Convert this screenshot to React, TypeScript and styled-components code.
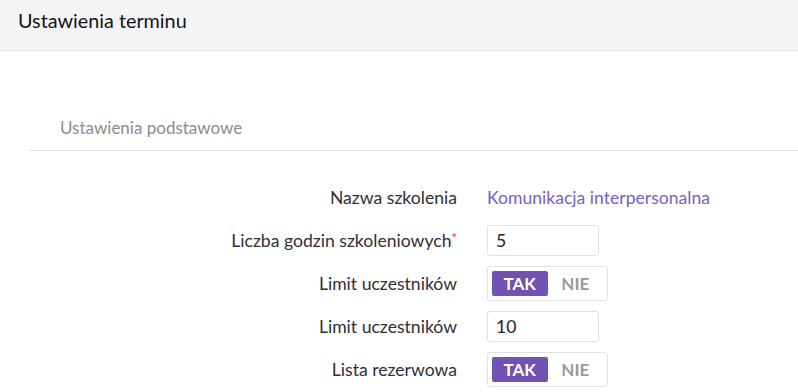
import { createGlobalStyle } from "styled-components";
import styled from "styled-components";

const GlobalStyle = createGlobalStyle`
  html, body {
    margin: 0;
    padding: 0;
    background: #fff;
  }
  body {
    font-family: Lato, "Open Sans", sans-serif;
    color: #333;
  }
`;

type Field =
  | { kind: "text"; label: string; value: string }
  | { kind: "input"; label: string; value: string; required?: boolean }
  | { kind: "toggle"; label: string; value: boolean };

const fields: Field[] = [
  { kind: "text", label: "Nazwa szkolenia", value: "Komunikacja interpersonalna" },
  { kind: "input", label: "Liczba godzin szkoleniowych", value: "5", required: true },
  { kind: "toggle", label: "Limit uczestników", value: true },
  { kind: "input", label: "Limit uczestników", value: "10" },
  { kind: "toggle", label: "Lista rezerwowa", value: true },
];

export default function App() {
  return (
    <>
      <GlobalStyle />
      <Page>
        <Header>
          <Title>Ustawienia terminu</Title>
        </Header>

        {/* ----- basic settings section ----- */}
        <Section>
          <SectionTitle>Ustawienia podstawowe</SectionTitle>
          <Form>
            {fields.map((f, i) => (
              <Row key={i}>
                <Label>
                  {f.label}
                  {f.kind === "input" && f.required ? <Star>*</Star> : null}
                </Label>
                <Value>
                  {f.kind === "text" ? <LinkText>{f.value}</LinkText> : null}
                  {f.kind === "input" ? <Input defaultValue={f.value} /> : null}
                  {f.kind === "toggle" ? (
                    <Toggle>
                      <ToggleBtn $active={f.value}>TAK</ToggleBtn>
                      <ToggleBtn $active={!f.value}>NIE</ToggleBtn>
                    </Toggle>
                  ) : null}
                </Value>
              </Row>
            ))}
          </Form>
        </Section>
      </Page>
    </>
  );
}

// ------- component styles ------
const Page = styled.div`
  width: 798px;
  min-height: 392px;
  overflow: hidden;
`;

const Header = styled.header`
  height: 51px;
  background: #f4f5f7;
  border-bottom: 1px solid #e3e5e8;
  display: flex;
  align-items: center;
  padding-left: 18px;
  box-sizing: border-box;
`;

const Title = styled.h1`
  margin: 0 0 10px;
  font-size: 19.8px;
  font-weight: 400;
  color: #141414;
`;

const Section = styled.section`
  padding-top: 67px;
  padding-left: 29px;
`;

const SectionTitle = styled.div`
  padding-left: 31px;
  height: 32px;
  line-height: 20px;
  font-size: 17px;
  color: #8c8c8c;
  border-bottom: 1px solid #e2e2e2;
`;

const Form = styled.div`
  padding-top: 25px;
  display: flex;
  flex-direction: column;
`;

const Row = styled.div`
  display: grid;
  grid-template-columns: 428px 1fr;
  column-gap: 30px;
  align-items: center;
  min-height: 43px;
`;

const Label = styled.div`
  text-align: right;
  font-size: 17.6px;
  color: #2f2f38;
`;

const Star = styled.span`
  color: #e0474c;
  font-size: 13px;
  vertical-align: top;
`;

const Value = styled.div`
  display: flex;
  align-items: center;
`;

const LinkText = styled.span`
  font-size: 17.6px;
  color: #7a5fbd;
`;

const Input = styled.input`
  width: 112px;
  height: 31px;
  box-sizing: border-box;
  border: 1px solid #e1e1e1;
  border-radius: 3px;
  padding: 0 8px;
  font-family: Lato, sans-serif;
  font-size: 17.6px;
  color: #222;
  outline: none;
`;

const Toggle = styled.div`
  width: 121px;
  height: 35px;
  box-sizing: border-box;
  border: 1px solid #e1e1e1;
  border-radius: 3px;
  padding: 4px;
  display: flex;
`;

const ToggleBtn = styled.span<{ $active: boolean }>`
  flex: 1;
  display: flex;
  align-items: center;
  justify-content: center;
  border-radius: 2px;
  font-size: 17px;
  font-weight: 700;
  background: ${(p) => (p.$active ? "#7152b3" : "transparent")};
  color: ${(p) => (p.$active ? "#fff" : "#999")};
`;
